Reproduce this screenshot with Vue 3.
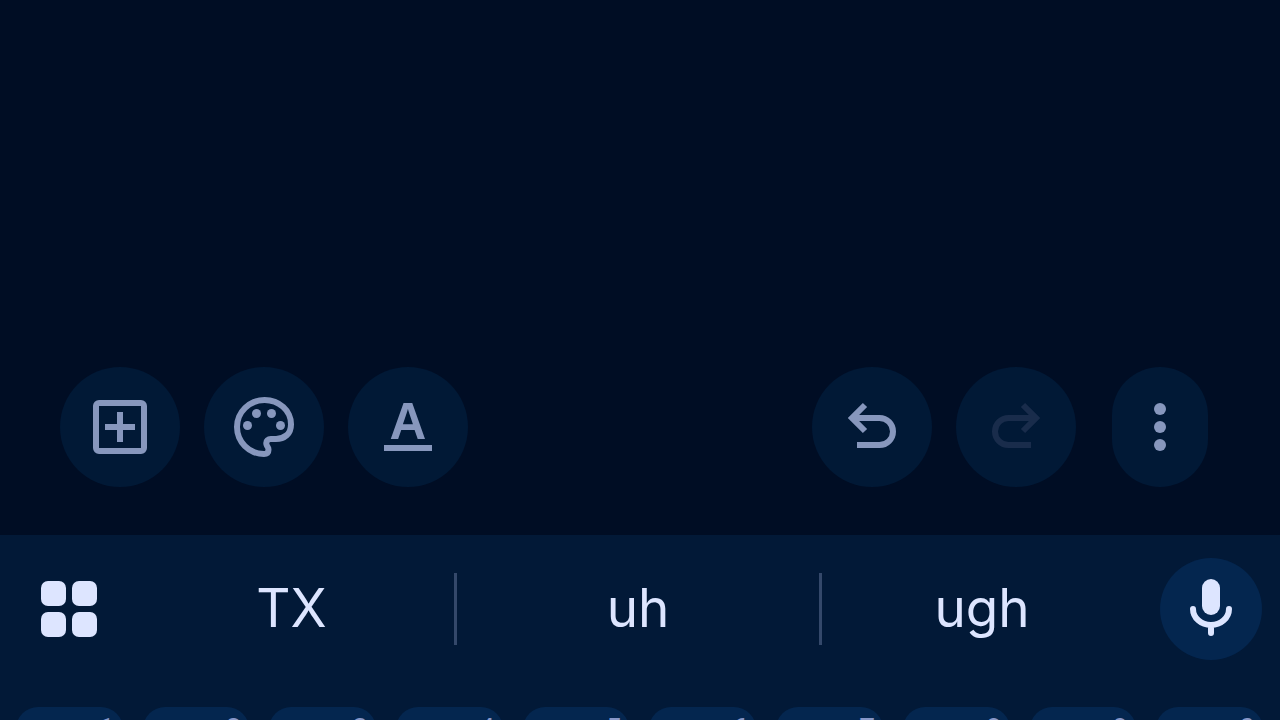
<script setup>
const keys = [
  { letter: 'q', hint: '1' },
  { letter: 'w', hint: '2' },
  { letter: 'e', hint: '3' },
  { letter: 'r', hint: '4' },
  { letter: 't', hint: '5' },
  { letter: 'y', hint: '6' },
  { letter: 'u', hint: '7' },
  { letter: 'i', hint: '8' },
  { letter: 'o', hint: '9' },
  { letter: 'p', hint: '0' },
]
const suggestions = ['TX', 'uh', 'ugh']
</script>

<template>
  <div class="screen">
    <main class="note"></main>

    <div class="toolbar">
      <div class="group">
        <button class="tool" aria-label="Add">
          <svg viewBox="0 0 72 72">
            <rect class="line" x="12" y="12" width="48" height="48" rx="3" />
            <path class="line" d="M36 21v30M21 36h30" />
          </svg>
        </button>
        <button class="tool" aria-label="Background">
          <svg viewBox="0 -960 960 960">
            <path d="M480-80q-82 0-155-31.500t-127.500-86Q143-252 111.500-325T80-480q0-83 32.500-156t88-127Q256-817 330-848.500T488-880q80 0 151 27.500t124.500 76q53.500 48.500 85 115T880-518q0 115-70 176.500T640-280h-74q-9 0-12.500 5t-3.500 11q0 12 15 34.500t15 51.500q0 50-27.500 74T480-80ZM480-160q9 0 14.500-5t5.500-13q0-14-15-33t-15-57q0-42 29-67t71-25h70q66 0 113-38.500T800-518q0-121-92.500-201.500T488-800q-136 0-232 93t-96 227q0 133 93.500 226.500T480-160Z" fill-rule="evenodd" />
            <circle cx="260" cy="-500" r="60" />
            <circle cx="380" cy="-660" r="60" />
            <circle cx="580" cy="-660" r="60" />
            <circle cx="700" cy="-500" r="60" />
          </svg>
        </button>
        <button class="tool" aria-label="Text format">
          <svg viewBox="0 0 72 72">
            <text class="format" x="36" y="48" text-anchor="middle">A</text>
            <rect x="12" y="54" width="48" height="6" />
          </svg>
        </button>
      </div>

      <div class="group">
        <button class="tool" aria-label="Undo">
          <svg viewBox="0 0 72 72">
            <path class="line" d="M21 54H43.500a13.500 13.500 0 0 0 0-27H17M29 14 16 27 29 40" />
          </svg>
        </button>
        <button class="tool" aria-label="Redo" disabled>
          <svg viewBox="0 0 72 72">
            <path class="line" d="M51 54H28.500a13.500 13.500 0 0 1 0-27H55M43 14 56 27 43 40" />
          </svg>
        </button>
        <button class="tool more" aria-label="More">
          <svg viewBox="0 0 72 72">
            <circle cx="36" cy="18" r="6" />
            <circle cx="36" cy="36" r="6" />
            <circle cx="36" cy="54" r="6" />
          </svg>
        </button>
      </div>
    </div>

    <section class="keyboard">
      <div class="strip">
        <button class="menu" aria-label="Keyboard menu">
          <svg viewBox="0 0 56 56">
            <rect width="25" height="25" rx="7" />
            <rect x="31" width="25" height="25" rx="7" />
            <rect y="31" width="25" height="25" rx="7" />
            <rect x="31" y="31" width="25" height="25" rx="7" />
          </svg>
        </button>
        <button v-for="word in suggestions" :key="word" class="word">{{ word }}</button>
        <button class="mic" aria-label="Voice typing">
          <svg viewBox="0 0 102 102">
            <rect x="42" y="21" width="18" height="36" rx="9" />
            <path class="line round" d="M33 51a18 16 0 0 0 36 0M51 67v8" />
          </svg>
        </button>
      </div>
      <div class="keys">
        <button v-for="key in keys" :key="key.hint" class="key" :aria-label="key.letter">
          <span class="hint">{{ key.hint }}</span>
        </button>
      </div>
    </section>
  </div>
</template>

<style>
body {
  background: #000d24;
}
</style>

<style scoped>
.screen {
  display: flex;
  flex-direction: column;
  height: 100vh;
  overflow: hidden;
  background: #000d24;
  font-family: Inter, Roboto, sans-serif;
}
.note {
  flex: 1;
}
button {
  margin: 0;
  padding: 0;
  border: 0;
  background: none;
  font: inherit;
  color: inherit;
}
svg {
  display: block;
  fill: currentColor;
}
.line {
  fill: none;
  stroke: currentColor;
  stroke-width: 6;
}
.round {
  stroke-linecap: round;
}
.toolbar {
  display: flex;
  justify-content: space-between;
  padding: 0 72px 48px 60px;
  color: #8797bd;
}
.group {
  display: flex;
  gap: 24px;
}
.tool {
  display: grid;
  place-items: center;
  width: 120px;
  height: 120px;
  border-radius: 60px;
  background: #011936;
}
.tool svg {
  width: 72px;
  height: 72px;
}
.tool:disabled {
  color: #192c4b;
}
.more {
  width: 96px;
  margin-left: 12px;
}
.format {
  font: 700 51px "Liberation Sans", Arial, sans-serif;
}
.keyboard {
  flex: none;
  height: 185px;
  overflow: hidden;
  background: #021937;
  color: #dde5ff;
}
.strip {
  display: grid;
  grid-template-columns: 129px 328fr 365fr 320fr 138px;
  align-items: center;
  height: 148px;
  margin-bottom: 24px;
}
.menu {
  padding-left: 41px;
}
.menu svg {
  width: 56px;
  height: 56px;
}
.word {
  height: 72px;
  font-size: 53px;
  line-height: 70px;
  padding-bottom: 2px;
}
.word:not(:nth-child(4)) {
  border-right: 3px solid #34486a;
}
.mic {
  justify-self: end;
  width: 102px;
  height: 102px;
  margin-right: 18px;
  border-radius: 50%;
  background: #04264f;
}
.keys {
  display: grid;
  grid-template-columns: repeat(10, 1fr);
  gap: 20px;
  padding: 0 17px 0 16px;
}
.key {
  display: flex;
  justify-content: flex-end;
  height: 132px;
  padding: 6px 8px;
  border-radius: 22px;
  background: #04264f;
  color: #8797c8;
}
.hint {
  font: 28px/32px Roboto, sans-serif;
}
</style>
